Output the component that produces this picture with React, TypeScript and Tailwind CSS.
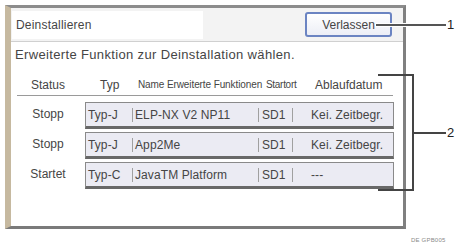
import React from 'react'

interface Row {
  status: string
  typ: string
  name: string
  ort: string
  datum: string
}

const rows: Row[] = [
  { status: 'Stopp', typ: 'Typ-J', name: 'ELP-NX V2 NP11', ort: 'SD1', datum: 'Kei. Zeitbegr.' },
  { status: 'Stopp', typ: 'Typ-J', name: 'App2Me', ort: 'SD1', datum: 'Kei. Zeitbegr.' },
  { status: 'Startet', typ: 'Typ-C', name: 'JavaTM Platform', ort: 'SD1', datum: '---' },
]

const font = { fontFamily: '"Liberation Sans", Arial, sans-serif' }

export default function App() {
  return (
    <div className="relative w-[462px] h-[251px] bg-white text-[#454545] overflow-hidden" style={font}>
      {/* Panel */}
      <div className="ml-[5px] mt-[5px] w-[401px] h-[224px] border-t-[3px] border-t-[#8c8c8c] border-l-[6px] border-l-[#c6b9a0] border-r-[3px] border-r-[#808080] border-b-[3px] border-b-[#7a7a7a] bg-white flex flex-col">
        {/* Title bar */}
        <div className="h-[34px] flex items-center pl-[1px] pr-[11px] bg-[#f3f3f3] border-b border-[#d0d0d0]">
          <div className="w-[191px] h-[28px] bg-white flex items-center pl-[4px] text-[12px] tracking-[0.2px]">
            Deinstallieren
          </div>
          <div className="flex-1" />
          <button className="w-[87px] h-[25px] rounded-[3px] border-2 border-[#6b84c2] bg-gradient-to-b from-white to-[#eceef6] text-[12px] text-[#454545]">
            Verlassen
          </button>
        </div>

        {/* Instruction */}
        <div className="h-[26px] flex items-center pl-[4px] text-[13px] tracking-[0.35px]">
          Erweiterte Funktion zur Deinstallation wählen.
        </div>

        {/* Table header */}
        <div className="h-[27px] flex items-end pb-[3px] text-[12px] leading-[14px] whitespace-nowrap">
          <div className="w-[74px] text-center">Status</div>
          <div className="w-[53px] pl-[15px]">Typ</div>
          <div className="w-[128px] text-[10px] tracking-[-0.1px]">Name Erweiterte Funktionen</div>
          <div className="w-[49px] text-[10px] tracking-[-0.3px]">Startort</div>
          <div>Ablaufdatum</div>
        </div>
        <div className="ml-[6px] mr-[10px] h-px bg-[#9a9a9a]" />

        {/* Rows */}
        <div className="mt-[6px] flex flex-col gap-[3px]">
          {rows.map((r, i) => (
            <div key={i} className="h-[27px] flex items-center">
              <div className="w-[74px] text-center text-[12px] pb-[3px]">{r.status}</div>
              <div className="w-[309px] h-[27px] flex items-center bg-[#ebebf3] border border-[#8a8a8a] border-b-[3px] border-b-[#686868] text-[12px] tracking-[0.1px] whitespace-nowrap">
                <div className="w-[46px] pl-[2px]">{r.typ}</div>
                <div className="w-px h-[14px] bg-[#a0a0a0]" />
                <div className="w-[125px] pl-[2px]">{r.name}</div>
                <div className="w-px h-[14px] bg-[#a0a0a0]" />
                <div className="w-[33px] pl-[3px]">{r.ort}</div>
                <div className="w-px h-[14px] bg-[#a0a0a0]" />
                <div className="pl-[18px]">{r.datum}</div>
              </div>
            </div>
          ))}
        </div>
      </div>

      {/* Callout 1 */}
      <div className="absolute left-[376px] top-[24px] w-[70px] h-[2px] bg-[#555] shadow-[0_0_0_1px_#ffffff]" />
      <div className="absolute left-[447px] top-[17px] text-[13px] leading-[16px] text-[#222]">1</div>

      {/* Callout 2 bracket */}
      <div className="absolute left-[378px] top-[74px] w-[36px] h-[117px] border-t-2 border-r-2 border-b-2 border-[#444]" />
      <div className="absolute left-[414px] top-[132px] w-[32px] h-[2px] bg-[#444]" />
      <div className="absolute left-[447px] top-[125px] text-[13px] leading-[16px] text-[#222]">2</div>

      {/* Figure code */}
      <div className="absolute left-[411px] top-[236px] text-[6px] leading-[8px] text-[#8a8a8a] tracking-[0.2px]">DE GPB005</div>
    </div>
  )
}
